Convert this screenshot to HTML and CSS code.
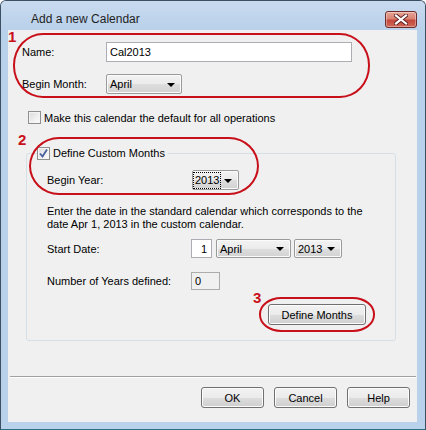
FILE: index.html
```html
<!DOCTYPE html>
<html>
<head>
<meta charset="utf-8">
<link rel="stylesheet" href="styles.css">
</head>
<body>
<div class="window">
  <div class="titlebar">
    <span class="title">Add a new Calendar</span>
    <span class="close">
      <svg width="14" height="11" viewBox="0 0 14 11"><path d="M2 1.5 L12 9.5 M12 1.5 L2 9.5" stroke="#5a2020" stroke-width="4" stroke-linecap="square"/><path d="M2 1.5 L12 9.5 M12 1.5 L2 9.5" stroke="#fff" stroke-width="2.2" stroke-linecap="square"/></svg>
    </span>
  </div>
  <div class="frame">
    <div class="client">
      <div class="row r-name">
        <span class="lbl">Name:</span>
        <span class="textbox name-box">Cal2013</span>
      </div>
      <div class="row r-month">
        <span class="lbl">Begin Month:</span>
        <span class="combo month-combo"><span class="val">April</span><span class="arrow"></span></span>
      </div>
      <div class="row r-default">
        <span class="cb"></span>
        <span>Make this calendar the default for all operations</span>
      </div>
      <fieldset class="group">
        <legend class="legend"><span class="cb checked"><svg width="11" height="11" viewBox="0 0 11 11"><path d="M2 5.5 L4.5 8.5 L9 1.5" fill="none" stroke="#4a5f9e" stroke-width="1.8"/></svg></span><span>Define Custom Months</span></legend>
        <div class="gbody">
          <div class="row r-year">
            <span class="lbl2">Begin Year:</span>
            <span class="combo year-combo"><span class="val focus">2013</span><span class="arrow"></span></span>
          </div>
          <p class="para">Enter the date in the standard calendar which corresponds to the<br>date Apr 1, 2013 in the custom calendar.</p>
          <div class="row r-start">
            <span class="lbl2">Start Date:</span>
            <span class="textbox day-box">1</span>
            <span class="combo sm-combo"><span class="val">April</span><span class="arrow"></span></span>
            <span class="combo sy-combo"><span class="val">2013</span><span class="arrow"></span></span>
          </div>
          <div class="row r-num">
            <span class="lbl2">Number of Years defined:</span>
            <span class="textbox ro-box">0</span>
          </div>
          <div class="row r-define">
            <span class="btn define-btn">Define Months</span>
          </div>
        </div>
      </fieldset>
      <div class="sep"></div>
      <div class="row r-buttons">
        <span class="btn">OK</span>
        <span class="btn">Cancel</span>
        <span class="btn">Help</span>
      </div>
    </div>
  </div>

  <div class="mark ring ring1"></div>
  <div class="mark ring ring2"></div>
  <div class="mark ring ring3"></div>
  <div class="mark num num1">1</div>
  <div class="mark num num2">2</div>
  <div class="mark num num3">3</div>
</div>
</body>
</html>
```

FILE: styles.css
```css
* { box-sizing: border-box; }
html, body { margin: 0; padding: 0; background: #fff; }
body {
  width: 426px;
  height: 430px;
  font-family: "Liberation Sans", Arial, sans-serif;
  font-size: 11px;
  color: #000;
}
.window {
  position: relative;
  width: 426px;
  height: 430px;
  border: 1px solid #3d4f63;
  border-bottom-color: #2c6f80;
  border-radius: 6px 6px 0 0;
  background: #b9d1ea;
  display: flex;
  flex-direction: column;
  overflow: hidden;
}
.titlebar {
  height: 29px;
  flex: none;
  display: flex;
  align-items: center;
  justify-content: space-between;
  padding: 0 8px 0 30px;
  background: linear-gradient(#c9daef, #b9d1ea);
}
.title {
  font-size: 12px;
  color: #1e1e1e;
  margin-top: 7px;
}
.close {
  width: 32px;
  height: 17px;
  margin-top: 8px;
  border: 1px solid #6e2b2b;
  border-radius: 3px;
  background: linear-gradient(#e8a696 0%, #d98272 45%, #c4473a 55%, #cf6a58 100%);
  box-shadow: inset 0 0 0 1px rgba(255,255,255,0.35);
  display: flex;
  align-items: center;
  justify-content: center;
}
.frame {
  flex: 1;
  padding: 0 8px 7px 7px;
}
.client {
  width: 409px;
  height: 392px;
  background: #f0f0f0;
  padding: 12px 0 0 14px;
}
.row {
  display: flex;
  align-items: center;
}
.lbl { width: 84px; flex: none; }
.lbl2 { width: 144px; flex: none; }
.textbox {
  height: 20px;
  border: 1px solid #abadb3;
  background: #fff;
  display: flex;
  align-items: center;
  padding: 0 3px;
}
.name-box { width: 246px; }
.r-month { margin-top: 12px; }
.combo {
  height: 20px;
  border: 1px solid #9a9a9a;
  border-radius: 2px;
  background: linear-gradient(#f3f3f3 0%, #ebebeb 50%, #dedede 51%, #d2d2d2 100%);
  box-shadow: inset 0 0 0 1px #fbfbfb;
  display: flex;
  align-items: center;
  justify-content: space-between;
  padding: 0 6px 0 3px;
}
.arrow {
  width: 0;
  height: 0;
  border-left: 4px solid transparent;
  border-right: 4px solid transparent;
  border-top: 4px solid #000;
  margin-top: 1px;
}
.month-combo { width: 76px; }
.r-default { margin-top: 17px; margin-left: 6px; gap: 3px; }
.cb {
  width: 13px;
  height: 13px;
  flex: none;
  border: 1px solid #8e8f8f;
  background: linear-gradient(135deg, #d9dadc 0%, #f4f4f4 70%, #fff 100%);
  box-shadow: inset 0 0 0 1px #f4f4f4;
  display: inline-flex;
  align-items: center;
  justify-content: center;
}
.group {
  margin: 22px 0 0 4px;
  width: 370px;
  height: 195px;
  border: 1px solid #d5dfe5;
  border-radius: 3px;
  padding: 0;
  min-width: 0;
}
.legend {
  margin-left: 10px;
  padding: 0 3px 0 0;
  display: flex;
  align-items: center;
  gap: 3px;
  height: 14px;
}
.gbody { padding: 0 0 0 20px; }
.r-year { margin-top: 10px; }
.year-combo { width: 47px; margin-left: 1px; padding-left: 1px; }
.focus { outline: 1px dotted #000; padding: 1px 1px; line-height: 13px; }
.para { margin: 15px 0 0 0; line-height: 13px; }
.r-start { margin-top: 8px; }
.day-box { width: 21px; height: 19px; justify-content: flex-end; padding-right: 4px; }
.sm-combo { width: 75px; height: 19px; margin-left: 4px; }
.sy-combo { width: 48px; height: 19px; margin-left: 3px; }
.r-num { margin-top: 14px; }
.ro-box { width: 29px; height: 18px; background: #f0f0f0; border-color: #acacac; }
.r-define { margin-top: 14px; justify-content: flex-end; padding-right: 29px; }
.btn {
  height: 21px;
  border: 1px solid #707070;
  border-radius: 3px;
  background: linear-gradient(#f2f2f2 0%, #ebebeb 50%, #dddddd 51%, #cfcfcf 100%);
  box-shadow: inset 0 0 0 1px #fcfcfc;
  display: flex;
  align-items: center;
  justify-content: center;
  width: 63px;
}
.define-btn { width: 98px; }
.sep {
  margin: 35px 0 0 -12px;
  width: 406px;
  border-top: 1px solid #a0a0a0;
  border-bottom: 1px solid #fff;
}
.r-buttons {
  margin-top: 9px;
  justify-content: flex-end;
  gap: 10px;
  padding-right: 7px;
}
.mark { position: absolute; }
.ring { border: 2px solid #c8101a; }
.ring1 { left: 12px; top: 32px; width: 357px; height: 65px; border-radius: 30px / 32px; }
.ring2 { left: 28px; top: 136px; width: 230px; height: 58px; border-radius: 30px / 29px; }
.ring3 { left: 258px; top: 296px; width: 116px; height: 35px; border-radius: 22px / 17px; }
.num {
  font-weight: bold;
  font-size: 15px;
  line-height: 15px;
  color: #c8101a;
}
.num1 { left: 7px; top: 28px; }
.num2 { left: 17px; top: 131px; }
.num3 { left: 252px; top: 289px; }
```
